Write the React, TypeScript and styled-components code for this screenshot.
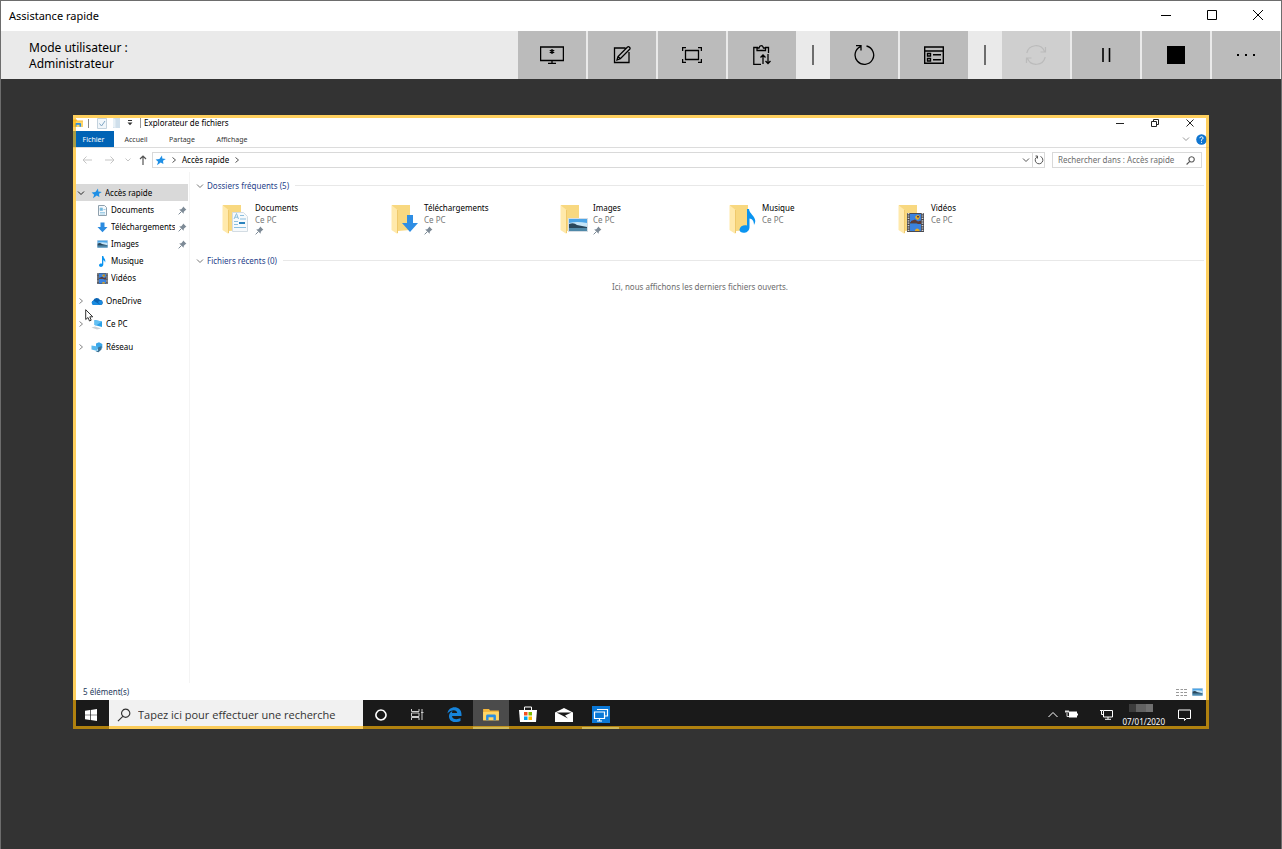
import React from 'react';
import styled, { createGlobalStyle } from 'styled-components';

const GlobalStyle = createGlobalStyle`
  * { box-sizing: border-box; }
  body { margin: 0; background: #333; font-family: "Noto Sans", "Open Sans", sans-serif; color: #000; }
  button, input { font: inherit; color: inherit; border: 0; padding: 0; margin: 0; background: none; border-radius: 0; }
  a { color: inherit; text-decoration: none; }
  h1, h2, p, ul { margin: 0; padding: 0; font: inherit; list-style: none; }
  svg { display: block; flex: none; }
`;

const Window = styled.div`
  min-height: 100vh;
  display: flex;
  flex-direction: column;
  border: 1px solid #6d6d6d;
  border-bottom: 0;
  background: #333;
`;

const TitleBar = styled.header`
  height: 30px;
  display: flex;
  align-items: center;
  justify-content: space-between;
  padding: 0 0 2px 8px;
  background: #fff;
  font-size: 11px;
`;

const WindowButtons = styled.div`
  display: flex;
  height: 100%;
`;

const WindowButton = styled.button`
  width: 46px;
  display: flex;
  align-items: center;
  justify-content: center;
`;

const Toolbar = styled.div`
  height: 48px;
  display: flex;
  padding-right: 1px;
  background: #eaeaea;
`;

const UserMode = styled.p`
  flex: 1;
  padding: 9px 28px 0;
  font-size: 12px;
  line-height: 16px;
`;

const ToolGroup = styled.div`
  display: flex;
  gap: 2px;
`;

const ToolButton = styled.button`
  width: 68px;
  display: flex;
  align-items: center;
  justify-content: center;
  background: #bbb;
  &:disabled { background: #cfcfcf; color: #bbb; }
`;

const Separator = styled.div`
  width: 34px;
  display: flex;
  align-items: center;
  justify-content: center;
  &::before { content: ""; width: 2px; height: 20px; background: #6d6d6d; }
`;

const Stage = styled.main`
  flex: 1;
  padding: 36px 72px;
`;

const Desktop = styled.section`
  position: relative;
  aspect-ratio: 568 / 307;
  display: flex;
  flex-direction: column;
  background: #fff;
  font-size: 8px;
  line-height: 12px;
  &::after {
    content: "";
    position: absolute;
    inset: 0;
    border: 3px solid rgba(255, 184, 10, 0.66);
    pointer-events: none;
  }
`;

const ExplorerTitle = styled.div`
  height: 16px;
  display: flex;
  align-items: center;
`;

const QuickTools = styled.div`
  display: flex;
  align-items: center;
  gap: 5px;
  height: 10px;
  margin-right: 3px;
  padding-right: 6px;
  border-right: 1px solid #999;
`;

const IconButton = styled.button<{ $w?: number }>`
  width: ${(p) => p.$w ?? 12}px;
  height: 12px;
  display: flex;
  align-items: center;
  justify-content: center;
`;

const Divider = styled.span`
  width: 1px;
  height: 9px;
  margin: 0 3px 0 0;
  background: #888;
`;

const ExplorerButtons = styled.div`
  display: flex;
  margin-left: auto;
  padding-right: 2px;
`;

const Ribbon = styled.nav`
  height: 17px;
  display: flex;
  border-bottom: 1px solid #dcdcdc;
`;

const RibbonTab = styled.button<{ $active?: boolean; $w: number }>`
  width: ${(p) => p.$w}px;
  padding-top: 1px;
  font-size: 7px;
  line-height: 15px;
  text-align: center;
  background: ${(p) => (p.$active ? '#0063b5' : 'none')};
  color: ${(p) => (p.$active ? '#fff' : '#333')};
`;

const RibbonEnd = styled.div`
  display: flex;
  align-items: center;
  gap: 6px;
  margin-left: auto;
  padding-right: 2px;
`;

const AddressRow = styled.div`
  display: flex;
  align-items: center;
  height: 24px;
  padding: 0 7px 0 3px;
`;

const NavButtons = styled.div`
  display: flex;
`;

const AddressBox = styled.div`
  flex: 1;
  height: 16px;
  display: flex;
  align-items: center;
  gap: 4px;
  padding-left: 2px;
  border: 1px solid #d9d9d9;
`;

const AddressEnd = styled.div`
  display: flex;
  height: 100%;
  align-items: center;
  margin-left: auto;
`;

const RefreshButton = styled.button`
  width: 12px;
  height: 100%;
  display: flex;
  align-items: center;
  justify-content: center;
  border-left: 1px solid #d9d9d9;
`;

const SearchBox = styled.label`
  width: 150px;
  height: 16px;
  display: flex;
  align-items: center;
  margin-left: 7px;
  padding: 0 6px 0 5px;
  border: 1px solid #d9d9d9;
  color: #6d6d6d;
`;

const SearchInput = styled.input`
  flex: 1;
  min-width: 0;
  outline: none;
  &::placeholder { color: inherit; opacity: 1; }
`;

const Body = styled.div`
  flex: 1;
  min-height: 0;
  display: flex;
`;

const Sidebar = styled.nav`
  width: 117px;
  padding: 12px 1px 0 3px;
  border-right: 1px solid #f4f4f4;
`;

const TreeItem = styled.li<{ $gap?: boolean }>`
  margin-top: ${(p) => (p.$gap ? 6 : 0)}px;
`;

const TreeLink = styled.a<{ $child?: boolean; $selected?: boolean }>`
  height: 17px;
  display: flex;
  align-items: center;
  gap: 3px;
  padding-top: 1px;
  padding-left: ${(p) => (p.$child ? 21 : 1)}px;
  padding-right: 1px;
  white-space: nowrap;
  background: ${(p) => (p.$selected ? '#d9d9d9' : 'none')};
`;

const TreeLabel = styled.span`
  flex: 1;
  min-width: 0;
  overflow: hidden;
`;

const Content = styled.div`
  flex: 1;
  min-width: 0;
  padding: 7px 5px 0 6px;
`;

const GroupHeader = styled.h2`
  display: flex;
  align-items: center;
  gap: 3px;
  height: 13px;
  color: #1f3f8a;
  &::after { content: ""; flex: 1; height: 1px; margin-left: 3px; background: #e8e8e8; }
`;

const Tiles = styled.ul`
  display: flex;
  height: 62px;
  padding: 10px 0 0 25px;
`;

const Tile = styled.li`
  width: 169px;
`;

const TileLink = styled.a`
  display: flex;
  gap: 4px;
`;

const TileText = styled.span`
  display: flex;
  flex-direction: column;
`;

const TileSub = styled.span`
  color: #757575;
`;

const EmptyNote = styled.p`
  padding-top: 14px;
  text-align: center;
  color: #6d6d6d;
`;

const StatusBar = styled.footer`
  height: 17px;
  display: flex;
  align-items: center;
  justify-content: space-between;
  padding: 1px 6px 0 10px;
  color: #1e395b;
`;

const ViewButtons = styled.div`
  display: flex;
  gap: 4px;
`;

const Taskbar = styled.div`
  height: 29px;
  display: flex;
  background: #1a1a1a;
  color: #fff;
`;

const StartButton = styled.button`
  width: 36px;
  display: flex;
  align-items: center;
  justify-content: center;
`;

const TaskSearch = styled.label`
  width: 254px;
  display: flex;
  align-items: center;
  gap: 7px;
  padding-left: 8px;
  background: #f1f1f1;
  color: #333;
  font-family: "Open Sans", "Noto Sans", sans-serif;
  font-size: 11px;
`;

const TaskApps = styled.div`
  width: 256px;
  display: flex;
`;

const TaskButton = styled.button<{ $active?: boolean; $running?: boolean }>`
  flex: 1;
  display: flex;
  align-items: center;
  justify-content: center;
  background: ${(p) => (p.$active ? '#4b4b4b' : 'none')};
  border-bottom: 2px solid ${(p) => (p.$active || p.$running ? '#76b9ed' : 'transparent')};
  border-top: 2px solid transparent;
`;

const Tray = styled.div`
  display: flex;
  align-items: center;
  margin-left: auto;
  padding-right: 18px;
`;

const TrayIcons = styled.div`
  display: flex;
  margin-right: 10px;
`;

const Clock = styled.time`
  width: 46px;
  margin-right: 12px;
  padding-top: 1px;
  display: flex;
  flex-direction: column;
  align-items: flex-end;
  gap: 5px;
  line-height: 10px;
`;

const HiddenHour = styled.span`
  width: 24px;
  height: 8px;
  margin-right: 12px;
  background: linear-gradient(90deg, #3c3c3c 30%, #626262 30%, #626262 70%, #707070 70%);
`;

const Pointer = styled.svg`
  position: absolute;
  left: 12px;
  top: 194px;
`;

const Line = ({ w = 16, h = w, vb, sw = 1, d, color = 'currentColor' }: { w?: number; h?: number; vb?: string; sw?: number; d: string; color?: string }) => (
  <svg width={w} height={h} viewBox={vb ?? `0 0 ${w} ${h}`} fill="none" stroke={color} strokeWidth={sw} aria-hidden="true">
    <path d={d} />
  </svg>
);

const Chevron = ({ dir, color = '#555' }: { dir: 'right' | 'down'; color?: string }) => (
  <Line w={8} d={dir === 'right' ? 'M2.5 1.5 5.5 4 2.5 6.5' : 'M1 2.5 4 5.5 7 2.5'} color={color} />
);

const Pin = () => (
  <svg width="9" height="9" viewBox="0 0 9 9" aria-hidden="true">
    <path d="M5.2.6 8.4 3.8 7.4 4.2 5.8 5.8 5.6 7.8 1.2 3.4 3.3 3.2 4.8 1.6Z" fill="#7d8a96" />
    <path d="M3.4 5.6.6 8.4" stroke="#7d8a96" />
  </svg>
);

const Star = () => (
  <svg width="11" height="11" viewBox="0 0 11 11" aria-hidden="true">
    <path d="M7 .6 7.3 3.6 10.8 3.9 8 5.7 8.4 9.1 5.7 7.6 2 10.2 3.1 6.7.6 4.6 4.4 3.9Z" fill="#1f8fe5" />
  </svg>
);

const NotePath = () => (
  <path d="M5 0H6.3C6.5 2.5 9.3 3 8 6.8 8 5 7.2 4.4 6.3 4.2V8.6C6.3 11.6 2 11.6 2 9.3 2 7.7 4 7.2 5 7.7Z" fill="#0a94f0" />
);

const PictureShapes = () => (
  <g>
    <path d="M0 0H20V14H0Z" fill="#d5dde4" />
    <path d="M1 1H19V13H1Z" fill="#4ba5e8" />
    <path d="M1 5Q9 3 19 5V9H1Z" fill="#c5e5f8" />
    <path d="M1 6Q6 4 9 7L19 9V10H1Z" fill="#29475c" />
    <path d="M1 10H19V13H1Z" fill="#4f88a8" />
  </g>
);

const MiniPicture = ({ w = 11, h = 8 }: { w?: number; h?: number }) => (
  <svg width={w} height={h} viewBox="0 0 20 14" preserveAspectRatio="none" aria-hidden="true">
    <PictureShapes />
  </svg>
);

const FilmShapes = () => (
  <g>
    <path d="M0 0H17V19H0Z" fill="#4a4a50" />
    <path d="M1.5 0V19M15.5 0V19" stroke="#d6d6d6" strokeWidth="1.6" strokeDasharray="1.2 1.2" />
    <path d="M3 1H14V9H3ZM3 10.5H14V18H3Z" fill="#3b82dd" />
    <path d="M8 4Q11 0 13 4L11 7 9 6ZM8 17Q10 14 12.500 17V18H8Z" fill="#e8ac22" />
    <path d="M4 8 8 6.500 11 8.500 14 7.500V11H11L9 9.500 4 10ZM10 3H12V4.500H10Z" fill="#5c3a35" />
  </g>
);

type Kind = 'documents' | 'downloads' | 'pictures' | 'music' | 'videos';

const SmallIcon = ({ kind }: { kind: Kind }) => {
  if (kind === 'pictures') return <MiniPicture />;
  return (
    <svg width="11" height="11" viewBox="0 0 11 11" aria-hidden="true">
      {kind === 'documents' && (
        <g>
          <path d="M1.5.5H7.500L9.500 2.500V10.500H1.500Z" fill="#f4f8fb" stroke="#8fa0ad" />
          <path d="M3 3H5.500V5.500H3ZM6.500 4.500H8.500M3 7.500H8M3 9H8" fill="#6db7e0" stroke="#8cc3e2" strokeWidth=".8" />
        </g>
      )}
      {kind === 'downloads' && <path d="M3.500.5H7.500V5H10.500L5.500 10.300.5 5H3.500Z" fill="#2b8be0" />}
      {kind === 'music' && <NotePath />}
      {kind === 'videos' && <g transform="scale(.64 .58)"><FilmShapes /></g>}
    </svg>
  );
};

const FolderIcon = ({ kind }: { kind: Kind }) => (
  <svg width="30" height="34" viewBox="0 0 30 34" aria-hidden="true">
    <path d="M2 3H20V28L8 29 2 28Z" fill="#f8d880" />
    <path d="M1.500 3 7.500 8V32L1.500 28Z" fill="#ffe9ab" />
    <path d="M7.500 8V31" stroke="#efc96c" />
    {kind === 'documents' && (
      <g>
        <path d="M11.500 10.500H22.500L26.500 14.500V29.500H11.500Z" fill="#f7fafc" stroke="#d3dce3" />
        <path d="M13 17 15.500 11.500 17.500 17M14 15.200H17M19 13.500H23M13 19.500H17M13 22.500H17M13 25.500H25M19 17H25" stroke="#8bbfdf" fill="none" />
        <path d="M18 20H24V22H18Z" fill="#2b83bd" />
      </g>
    )}
    {kind === 'downloads' && <path d="M17 13H23V21H28L20 30 12 21H17Z" fill="#2f8ee4" />}
    {kind === 'pictures' && <g transform="translate(9 16)"><PictureShapes /></g>}
    {kind === 'music' && (
      <path d="M19 7H21C21.500 13 30.500 15 26 23 26 18.500 24 17 21.500 16.500V25.500C21 32.500 11 32 11.500 27.500 12 24 16 22.500 19 23.500Z" fill="#0a94f0" />
    )}
    {kind === 'videos' && <g transform="translate(10 11)"><FilmShapes /></g>}
  </svg>
);

const FolderApp = ({ w }: { w: number }) => (
  <svg width={w} height={w * 0.8} viewBox="0 0 16 13" aria-hidden="true">
    <path d="M0 1H6L7 2.500H16V12.500H0Z" fill="#f5b73c" />
    <path d="M0 4H16V12.500H0Z" fill="#ffd667" />
    <path d="M3 12.500V8Q3 6.500 4.500 6.500H11.500Q13 6.500 13 8V12.500H10.500V9.500H5.500V12.500Z" fill="#2b8ee0" />
  </svg>
);

const Magnifier = ({ w, sw = 1, color }: { w: number; sw?: number; color?: string }) => (
  <Line w={w} vb="0 0 12 12" d="M7.500 1A3.500 3.500 0 1 1 7.400 1ZM5 7.200.8 11.300" sw={sw} color={color} />
);

const tiles: { kind: Kind; name: string; pinned: boolean }[] = [
  { kind: 'documents', name: 'Documents', pinned: true },
  { kind: 'downloads', name: 'Téléchargements', pinned: true },
  { kind: 'pictures', name: 'Images', pinned: true },
  { kind: 'music', name: 'Musique', pinned: false },
  { kind: 'videos', name: 'Vidéos', pinned: false },
];

const OneDriveIcon = () => (
  <svg width="12" height="11" viewBox="0 0 12 11" aria-hidden="true">
    <path d="M2.500 9A2.400 2.400 0 0 1 2.300 4.400 3.600 3.600 0 0 1 9 4 2.500 2.500 0 0 1 9.500 9Z" fill="#0a64b4" />
    <path d="M2.500 9A2.400 2.400 0 0 1 2.300 4.500L9.500 9ZM7 6 9.600 4.200A2.500 2.500 0 0 1 9.500 9Z" fill="#1b8ce0" />
  </svg>
);

const ComputerIcon = () => (
  <svg width="12" height="11" viewBox="0 0 12 11" aria-hidden="true">
    <path d="M3.500 1 11 2.500V8L3.500 6Z" fill="#2ba0e6" />
    <path d="M3.500 1 11 2.500 5 6.400 3.500 6Z" fill="#62c0f3" />
    <path d="M.5 8.500 4 7.500 10 9.500 6 10.500Z" fill="#c8d0d7" />
  </svg>
);

const NetworkIcon = () => (
  <svg width="12" height="11" viewBox="0 0 12 11" aria-hidden="true">
    <path d="M5 1.500 8 .3 11.300 2V6L8 8 5 6Z" fill="#3aa6e8" />
    <path d="M.5 3.500 6.500 4.500V9L.5 7.500Z" fill="#59b8ee" />
    <path d="M7 5.500 10.500 4V7.500L7.500 10.300 4.500 9.500 7 8.800Z" fill="#3c7396" />
  </svg>
);

const devices = [
  { name: 'OneDrive', icon: <OneDriveIcon /> },
  { name: 'Ce PC', icon: <ComputerIcon /> },
  { name: 'Réseau', icon: <NetworkIcon /> },
];

export default function App() {
  return (
    <Window>
      <GlobalStyle />
      <TitleBar>
        <h1>Assistance rapide</h1>
        <WindowButtons>
          <WindowButton aria-label="Réduire"><Line w={10} d="M0 5.500H10" color="#000" /></WindowButton>
          <WindowButton aria-label="Agrandir"><Line w={10} d="M.5.5H9.500V9.500H.5Z" color="#000" /></WindowButton>
          <WindowButton aria-label="Fermer"><Line w={10} d="M0 0 10 10M10 0 0 10" color="#000" /></WindowButton>
        </WindowButtons>
      </TitleBar>

      <Toolbar>
        <UserMode>Mode utilisateur :<br />Administrateur</UserMode>
        <ToolGroup>
          <ToolButton aria-label="Sélectionner un écran">
            <Line w={24} h={18} d="M.6 1H23.400V14.500H.6ZM12 14.500V17M8 17.300H16M12 3V8M9.800 4.200 14.200 6.800M14.200 4.200 9.800 6.800" sw={1.3} />
          </ToolButton>
          <ToolButton aria-label="Annoter">
            <Line w={18} d="M12.500 2H1.500V16.500H16V6M4 14 5 10.500 14.500 1Q15.500.3 16.500 1.200 17.500 2.300 16.700 3.200L7.300 12.800ZM5 10.500 7.300 12.800" sw={1.3} />
          </ToolButton>
          <ToolButton aria-label="Taille réelle">
            <Line w={20} h={16} d="M3.500 3.500H16.500V12.500H3.500ZM.6 4V.6H4M16 .6H19.400V4M.6 12V15.400H4M16 15.400H19.400V12" sw={1.3} />
          </ToolButton>
          <ToolButton aria-label="Instructions">
            <Line w={18} h={20} d="M5 2.500H.8V19.300H8M12 2.500H15.500V8M4 5.500V3H6Q6.500.7 8.200.7 10 .7 10.500 3H12.500V5.500ZM10 19V10M7.500 12.500 10 10 12.500 12.500M15 9V18.500M12.500 16 15 18.500 17.500 16" sw={1.3} />
          </ToolButton>
        </ToolGroup>
        <Separator />
        <ToolGroup>
          <ToolButton aria-label="Redémarrer">
            <Line w={22} d="M13.500 2A9.300 9.300 0 1 1 7.500 2.600M3 1.700H8V6.500" sw={1.3} />
          </ToolButton>
          <ToolButton aria-label="Gestionnaire des tâches">
            <Line w={20} h={18} d="M.7 1H19.300V17.300H.7ZM.7 5H19.300M3.500 7.500H6.500V10H3.500ZM3.500 12.500H6.500V15H3.500ZM9 8.800H17M9 13.800H17" sw={1.4} />
          </ToolButton>
        </ToolGroup>
        <Separator />
        <ToolGroup>
          <ToolButton disabled aria-label="Reconnecter">
            <Line w={22} d="M1.800 9A9.300 9.300 0 0 1 19.500 7.500M20.500 3V8H15.500M20.200 13A9.300 9.300 0 0 1 2.500 14.500M1.500 19V14H6.500" sw={1.2} />
          </ToolButton>
          <ToolButton aria-label="Pause">
            <Line w={10} h={16} d="M2 1V15M8.500 1V15" sw={1.6} />
          </ToolButton>
          <ToolButton aria-label="Terminer">
            <svg width="18" height="18" viewBox="0 0 18 18" aria-hidden="true"><path d="M0 0H18V18H0Z" /></svg>
          </ToolButton>
          <ToolButton aria-label="Plus">
            <svg width="18" height="4" viewBox="0 0 18 4" aria-hidden="true"><path d="M0 1H2V3H0ZM8 1H10V3H8ZM16 1H18V3H16Z" /></svg>
          </ToolButton>
        </ToolGroup>
      </Toolbar>

      <Stage>
        <Desktop>
          <ExplorerTitle>
            <QuickTools>
              <FolderApp w={10} />
              <Divider />
              <IconButton $w={10} aria-label="Propriétés">
                <svg width="10" height="11" viewBox="0 0 10 11" aria-hidden="true"><path d="M.5.5H9.500V10.500H.5Z" fill="#f1f6fa" stroke="#c3d2dd" /><path d="M2.500 5.500 4.500 8 8 3" fill="none" stroke="#7fa6c4" /></svg>
              </IconButton>
              <IconButton $w={9} aria-label="Nouveau dossier">
                <svg width="8" height="10" viewBox="0 0 8 10" aria-hidden="true"><path d="M0 0H7V10H0Z" fill="#cfdfeb" /><path d="M0 0 2.500 1.500V10L0 9Z" fill="#e7f0f6" /></svg>
              </IconButton>
              <IconButton $w={8} aria-label="Personnaliser">
                <svg width="6" height="6" viewBox="0 0 6 6" aria-hidden="true"><path d="M1 0H5V1H1ZM.5 2.500H5.500L3 5.200Z" fill="#333" /></svg>
              </IconButton>
            </QuickTools>
            <span>Explorateur de fichiers</span>
            <ExplorerButtons>
              <IconButton $w={35} aria-label="Réduire"><Line w={8} d="M0 4.500H8" color="#222" /></IconButton>
              <IconButton $w={35} aria-label="Niveau inférieur"><Line w={8} d="M.5 2.500H5.500V7.500H.5ZM2.500 2V.5H7.500V5.500H6" color="#222" /></IconButton>
              <IconButton $w={35} aria-label="Fermer"><Line w={8} d="M.5.5 7.500 7.500M7.500.5.5 7.500" color="#222" /></IconButton>
            </ExplorerButtons>
          </ExplorerTitle>

          <Ribbon>
            <RibbonTab $w={41} $active>Fichier</RibbonTab>
            <RibbonTab $w={44}>Accueil</RibbonTab>
            <RibbonTab $w={48}>Partage</RibbonTab>
            <RibbonTab $w={52}>Affichage</RibbonTab>
            <RibbonEnd>
              <Chevron dir="down" color="#999" />
              <svg width="11" height="11" viewBox="0 0 11 11" aria-hidden="true">
                <circle cx="5.500" cy="5.500" r="5.300" fill="#0f75d0" />
                <path d="M3.800 4.200Q4 2.700 5.500 2.700 7.200 2.800 7.100 4.200 7 5 5.500 5.700V6.800M5.500 7.800V8.800" fill="none" stroke="#fff" />
              </svg>
            </RibbonEnd>
          </Ribbon>

          <AddressRow>
            <NavButtons>
              <IconButton $w={22} aria-label="Précédent"><Line w={10} d="M10 5H1M4.500 1.500 1 5 4.500 8.500" color="#c5c5c5" /></IconButton>
              <IconButton $w={24} aria-label="Suivant"><Line w={10} d="M0 5H9M5.500 1.500 9 5 5.500 8.500" color="#c5c5c5" /></IconButton>
              <IconButton aria-label="Emplacements récents"><Line w={6} d="M.5 1.500 3 4 5.500 1.500" color="#c5c5c5" /></IconButton>
              <IconButton $w={18} aria-label="Dossier parent"><Line w={8} h={10} d="M4 10V1M1 4 4 1 7 4" sw={1.2} color="#555" /></IconButton>
            </NavButtons>
            <AddressBox>
              <Star />
              <Chevron dir="right" />
              <a href="#acces-rapide">Accès rapide</a>
              <Chevron dir="right" />
              <AddressEnd>
                <IconButton aria-label="Historique"><Chevron dir="down" /></IconButton>
                <RefreshButton aria-label="Actualiser">
                  <Line w={10} d="M6.500 1.500A3.800 3.800 0 1 1 3 1.800M1.500 1H3.500V3.500" color="#555" />
                </RefreshButton>
              </AddressEnd>
            </AddressBox>
            <SearchBox>
              <SearchInput type="text" aria-label="Rechercher" placeholder="Rechercher dans : Accès rapide" />
              <Magnifier w={9} sw={1.5} color="#555" />
            </SearchBox>
          </AddressRow>

          <Body>
            <Sidebar>
              <ul>
                <TreeItem>
                  <TreeLink href="#acces-rapide" $selected>
                    <Chevron dir="down" color="#222" />
                    <span />
                    <Star />
                    <TreeLabel>Accès rapide</TreeLabel>
                  </TreeLink>
                </TreeItem>
                {tiles.map((t) => (
                  <TreeItem key={t.kind}>
                    <TreeLink href={`#${t.kind}`} $child>
                      <SmallIcon kind={t.kind} />
                      <TreeLabel>{t.name}</TreeLabel>
                      {t.pinned && <Pin />}
                    </TreeLink>
                  </TreeItem>
                ))}
                {devices.map((d) => (
                  <TreeItem key={d.name} $gap>
                    <TreeLink href={`#${d.name}`}>
                      <Chevron dir="right" color="#888" />
                      <span />
                      {d.icon}
                      <TreeLabel>{d.name}</TreeLabel>
                    </TreeLink>
                  </TreeItem>
                ))}
              </ul>
            </Sidebar>
            <Content>
              <GroupHeader><Chevron dir="down" color="#777" />Dossiers fréquents (5)</GroupHeader>
              <Tiles>
                {tiles.map((t) => (
                  <Tile key={t.kind}>
                    <TileLink href={`#${t.kind}`}>
                      <FolderIcon kind={t.kind} />
                      <TileText>
                        <span>{t.name}</span>
                        <TileSub>Ce PC</TileSub>
                        {t.pinned && <Pin />}
                      </TileText>
                    </TileLink>
                  </Tile>
                ))}
              </Tiles>
              <GroupHeader><Chevron dir="down" color="#777" />Fichiers récents (0)</GroupHeader>
              <EmptyNote>Ici, nous affichons les derniers fichiers ouverts.</EmptyNote>
            </Content>
          </Body>

          <StatusBar>
            <span>5 élément(s)</span>
            <ViewButtons>
              <IconButton aria-label="Détails"><Line w={11} h={9} d="M0 1.500H3M0 4.500H3M0 7.500H3M4.500 1.500H7M8 1.500H11M4.500 4.500H7M8 4.500H11M4.500 7.500H7M8 7.500H11" color="#999" /></IconButton>
              <IconButton aria-label="Grandes icônes"><MiniPicture /></IconButton>
            </ViewButtons>
          </StatusBar>

          <Taskbar>
            <StartButton aria-label="Démarrer">
              <svg width="12" height="12" viewBox="0 0 12 12" fill="#fff" aria-hidden="true"><path d="M0 1.700 5 1V5.700H0ZM5.700.9 12 0V5.700H5.700ZM0 6.300H5V11L0 10.300ZM5.700 6.300H12V12L5.700 11.100Z" /></svg>
            </StartButton>
            <TaskSearch>
              <Magnifier w={14} />
              <SearchInput type="text" aria-label="Recherche Windows" placeholder="Tapez ici pour effectuer une recherche" />
            </TaskSearch>
            <TaskApps>
              <TaskButton aria-label="Cortana"><Line w={12} d="M6 1A5 5 0 1 1 5.900 1Z" sw={1.6} /></TaskButton>
              <TaskButton aria-label="Affichage des tâches"><Line w={13} h={11} d="M.5 0V2.500H8V0M.5 11V8.500H8V11M.5 4V7.500H8V4ZM11 0V11M10 3.500H12.500" color="#ccc" /></TaskButton>
              <TaskButton aria-label="Edge">
                <svg width="15" height="15" viewBox="0 0 15 15" aria-hidden="true"><path d="M.5 6.500C1.200-1.800 14.500-2.200 14.500 7.500V9H5C5.300 12.700 10.500 12.800 13.500 11V14C8 16.500 1.500 14.500 2 8.500 2.300 6.300 3.700 5 5.500 4 5 5 5 5.500 5 6H10.200C10.200 2.200 4 2 .5 6.500Z" fill="#1684dc" /></svg>
              </TaskButton>
              <TaskButton aria-label="Explorateur de fichiers" $active><FolderApp w={16} /></TaskButton>
              <TaskButton aria-label="Microsoft Store">
                <svg width="18" height="17" viewBox="0 0 18 17" aria-hidden="true"><path d="M0 4H18L17 16H1Z" fill="#fff" /><path d="M5.500 4V1H12.500V4" fill="none" stroke="#fff" /><path d="M5 6H8.500V9.500H5Z" fill="#f25022" /><path d="M9.500 6H13V9.500H9.500Z" fill="#7fba00" /><path d="M5 10.500H8.500V14H5Z" fill="#00a4ef" /><path d="M9.500 10.500H13V14H9.500Z" fill="#ffb900" /></svg>
              </TaskButton>
              <TaskButton aria-label="Courrier">
                <svg width="18" height="14" viewBox="0 0 18 14" aria-hidden="true"><path d="M0 4.500 9 0 18 4.500V14H0Z" fill="#fff" /><path d="M1.500 4.500H16.500L10 7.500 13 10.500Z" fill="#1a1a1a" /></svg>
              </TaskButton>
              <TaskButton aria-label="Assistance rapide" $running>
                <svg width="18" height="17" viewBox="0 0 18 17" aria-hidden="true"><path d="M0 0H18V17H0Z" fill="#0a78d7" /><path d="M5 3.500H15.500V10H12.500M2.500 6H12.500V12.500H2.500ZM7.500 12.500V15M5 15H10" fill="none" stroke="#fff" strokeWidth="1.200" /></svg>
              </TaskButton>
            </TaskApps>
            <Tray>
              <TrayIcons>
                <IconButton aria-label="Icônes cachées"><Line w={10} h={8} d="M.5 6 5 1.500 9.500 6" /></IconButton>
                <IconButton $w={24} aria-label="Batterie">
                  <svg width="13" height="9" viewBox="0 0 13 9" aria-hidden="true"><path d="M4 1.500H12V7.500H4Z" fill="#fff" /><path d="M12 3.500H13V5.500H12Z" fill="#fff" /><path d="M0 1.500H4M1 0V3M3 0V3M2 3V6.500H4" stroke="#ddd" fill="none" /></svg>
                </IconButton>
              </TrayIcons>
              <IconButton $w={26} aria-label="Réseau"><Line w={13} h={11} d="M3.500 1.500H12.500V8H3.500ZM8 8V10M5 10.300H11M0 1.500H3M1.500 1.500V5.500H3" /></IconButton>
              <Clock dateTime="2020-01-07"><HiddenHour /><span>07/01/2020</span></Clock>
              <IconButton $w={14} aria-label="Centre de notifications"><Line w={13} h={12} d="M.5 1H12.500V9.500H8.500L6.500 11.500V9.500H.5Z" /></IconButton>
            </Tray>
          </Taskbar>
          <Pointer width="10" height="13" viewBox="0 0 10 13" aria-hidden="true">
            <path d="M.7.7V10.500L3 8.500 4.500 12 6.200 11.200 4.800 7.800H7.800Z" fill="#fff" stroke="#333" />
          </Pointer>
        </Desktop>
      </Stage>
    </Window>
  );
}
